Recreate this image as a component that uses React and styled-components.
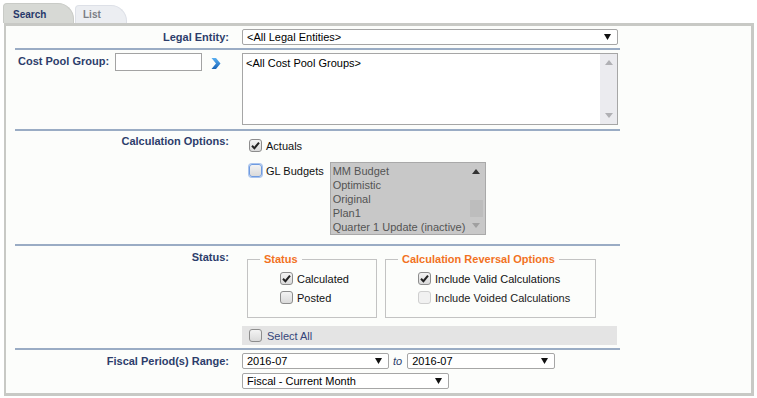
import styled, { createGlobalStyle } from "styled-components";

const GlobalStyle = createGlobalStyle`
  body {
    margin: 0;
    background: #ffffff;
    font-family: "Liberation Sans", Arial, sans-serif;
    font-size: 11px;
    color: #111;
  }
`;

const budgets = ["MM Budget", "Optimistic", "Original", "Plan1", "Quarter 1 Update (inactive)"];

const Tick = () => (
  <svg width="11" height="11" viewBox="0 0 11 11">
    <path d="M2 5.8 L4.4 8.2 L9 2.6" fill="none" stroke="#222" strokeWidth="2" />
  </svg>
);

const Check = ({ checked, focus, disabled, children }) => (
  <CheckRow $disabled={disabled}>
    <Box $focus={focus} $disabled={disabled}>{checked && <Tick />}</Box>
    {children}
  </CheckRow>
);

const Dropdown = ({ width, children }) => (
  <SelectBox $w={width}>
    <span>{children}</span>
    <svg width="7" height="6" viewBox="0 0 7 6">
      <path d="M0 0 H7 L3.5 6 Z" fill="#111" />
    </svg>
  </SelectBox>
);

const Arrow = ({ up, color }) => (
  <ArrowCell>
    <svg width="8" height="5" viewBox="0 0 8 5">
      <path d={up ? "M0 5 H8 L4 0 Z" : "M0 0 H8 L4 5 Z"} fill={color} />
    </svg>
  </ArrowCell>
);

const App = () => {
  return (
    <Page>
      <GlobalStyle />
      <Tabs>
        <Tab $active>Search</Tab>
        <Tab>List</Tab>
      </Tabs>
      <Panel>
        <Form>
          <Section $pad="3px 0 3px">
            <Label>Legal Entity:</Label>
            <Dropdown width={376}>&lt;All Legal Entities&gt;</Dropdown>
          </Section>

          <Section $pad="3px 0 4px">
            <CostCell>
              <Label $left>Cost Pool Group:</Label>
              <TextInput />
              <Go width="10" height="11" viewBox="0 0 10 11">
                <defs>
                  <linearGradient id="go" x1="0" y1="0" x2="0" y2="1">
                    <stop offset="0" stopColor="#5ab0f2" />
                    <stop offset="1" stopColor="#1763b8" />
                  </linearGradient>
                </defs>
                <path d="M0.5 0 H5 L9.5 5.5 L5 11 H0.5 L5 5.5 Z" fill="url(#go)" />
              </Go>
            </CostCell>
            <ListBox $w={376} $h={72}>
              <Items $pad="2px 3px">
                <Item>&lt;All Cost Pool Groups&gt;</Item>
              </Items>
              <VScroll $bg="#ebebef">
                <Arrow up color="#b0b0b4" />
                <Spacer />
                <Arrow color="#b0b0b4" />
              </VScroll>
            </ListBox>
          </Section>

          <Section $pad="0 0 9px">
            <Label $top={2}>Calculation Options:</Label>
            <Column $top={7}>
              <Check checked>Actuals</Check>
              <BudgetRow>
                <Check focus>GL Budgets</Check>
                <ListBox $w={156} $h={73} $disabled>
                  <Items $pad="1px 2px">
                    {budgets.map((b) => (
                      <Item key={b} $muted>{b}</Item>
                    ))}
                  </Items>
                  <VScroll $bg="#c8c8c8">
                    <Arrow up color="#333" />
                    <Spacer />
                    <Thumb />
                    <Arrow color="#a0a0a0" />
                  </VScroll>
                </ListBox>
              </BudgetRow>
            </Column>
          </Section>

          <Section $pad="0 0 3px">
            <Label $top={3}>Status:</Label>
            <Column $top={6}>
              <Groups>
                <Group $w={130}>
                  <Legend>Status</Legend>
                  <GroupBody>
                    <Check checked>Calculated</Check>
                    <Check>Posted</Check>
                  </GroupBody>
                </Group>
                <Group $w={211}>
                  <Legend>Calculation Reversal Options</Legend>
                  <GroupBody>
                    <Check checked>Include Valid Calculations</Check>
                    <Check disabled>Include Voided Calculations</Check>
                  </GroupBody>
                </Group>
              </Groups>
              <SelectAll>
                <Check>
                  <SelectAllText>Select All</SelectAllText>
                </Check>
              </SelectAll>
            </Column>
          </Section>

          <Section $pad="3px 0 4px" $last>
            <Label>Fiscal Period(s) Range:</Label>
            <Column>
              <RangeRow>
                <Dropdown width={147}>2016-07</Dropdown>
                <To>to</To>
                <Dropdown width={148}>2016-07</Dropdown>
              </RangeRow>
              <Dropdown width={207}>Fiscal - Current Month</Dropdown>
            </Column>
          </Section>
        </Form>
      </Panel>
    </Page>
  );
};

export default App;

const Page = styled.div`
  padding: 3px 0 0 3px;
  width: 750px;
`;

const Tabs = styled.div`
  display: flex;
  align-items: flex-end;
  gap: 1px;
  height: 20px;
`;

const Tab = styled.div`
  box-sizing: border-box;
  height: ${(p) => (p.$active ? 20 : 18)}px;
  width: ${(p) => (p.$active ? 71 : 52)}px;
  padding: ${(p) => (p.$active ? "5px 0 0 9px" : "3px 0 0 7px")};
  background: ${(p) => (p.$active ? "#d7d9d5" : "#eceef2")};
  border: 1px solid ${(p) => (p.$active ? "#c9cbc7" : "#dde0e7")};
  border-bottom: none;
  border-radius: 4px 16px 0 0;
  font-size: 10px;
  font-weight: bold;
  color: ${(p) => (p.$active ? "#26386a" : "#7a7d85")};
`;

const Panel = styled.div`
  box-sizing: border-box;
  width: 750px;
  border: 3px solid #c8c9c5;
  border-left-width: 2px;
  margin-left: 1px;
  background: #fcfdfb;
  padding-left: 9px;
`;

const Form = styled.div`
  width: 605px;
`;

const Section = styled.div`
  display: grid;
  grid-template-columns: 227px 1fr;
  align-items: start;
  padding: ${(p) => p.$pad};
  border-bottom: ${(p) => (p.$last ? "none" : "2px solid #9aacc4")};
`;

const Label = styled.div`
  font-weight: bold;
  color: #2d3d6b;
  line-height: 16px;
  white-space: nowrap;
  text-align: ${(p) => (p.$left ? "left" : "right")};
  padding: ${(p) => (p.$left ? "0 0 0 3px" : `${p.$top || 0}px 13px 0 0`)};
`;

const CostCell = styled.div`
  display: flex;
  align-items: flex-start;
`;

const TextInput = styled.div`
  box-sizing: border-box;
  width: 87px;
  height: 18px;
  margin-left: 6px;
  border: 1px solid #a3a3a3;
  background: #fff;
`;

const Go = styled.svg`
  margin: 5px 0 0 9px;
`;

const SelectBox = styled.div`
  box-sizing: border-box;
  width: ${(p) => p.$w}px;
  height: 16px;
  display: flex;
  align-items: center;
  justify-content: space-between;
  padding: 0 6px 0 4px;
  border: 1px solid #a6a6a6;
  border-radius: 2px;
  background: #fff;
  color: #000;
  line-height: 14px;
`;

const ListBox = styled.div`
  box-sizing: border-box;
  width: ${(p) => p.$w}px;
  height: ${(p) => p.$h}px;
  display: flex;
  border: 1px solid ${(p) => (p.$disabled ? "#a9a9a9" : "#a6a6a6")};
  background: ${(p) => (p.$disabled ? "#c8c8c8" : "#fff")};
`;

const Items = styled.div`
  flex: 1;
  padding: ${(p) => p.$pad};
  overflow: hidden;
`;

const Item = styled.div`
  line-height: 14px;
  white-space: nowrap;
  color: ${(p) => (p.$muted ? "#545454" : "#000")};
`;

const VScroll = styled.div`
  width: 17px;
  display: flex;
  flex-direction: column;
  background: ${(p) => p.$bg};
`;

const ArrowCell = styled.div`
  height: 17px;
  display: flex;
  align-items: center;
  justify-content: center;
`;

const Spacer = styled.div`
  flex: 1;
`;

const Thumb = styled.div`
  height: 17px;
  margin: 0 2px;
  background: #bdbdbd;
`;

const Column = styled.div`
  display: flex;
  flex-direction: column;
  align-items: flex-start;
  gap: ${(p) => (p.$top ? 0 : 4)}px;
  padding-top: ${(p) => p.$top || 0}px;
`;

const CheckRow = styled.div`
  display: flex;
  align-items: center;
  gap: 4px;
  height: 15px;
  padding-left: 7px;
  white-space: nowrap;
  color: ${(p) => (p.$disabled ? "#222" : "#111")};
`;

const Box = styled.span`
  box-sizing: border-box;
  width: 13px;
  height: 13px;
  display: flex;
  align-items: center;
  justify-content: center;
  border-radius: 3px;
  border: 1px solid ${(p) => (p.$focus ? "#6f9be0" : p.$disabled ? "#cfcfcf" : "#8d8d8d")};
  box-shadow: ${(p) => (p.$focus ? "0 0 0 1px #a9c4ee" : "none")};
  background: ${(p) =>
    p.$disabled ? "#f1f1f1" : "linear-gradient(#f3f3f3, #dadada)"};
`;

const BudgetRow = styled.div`
  display: flex;
  align-items: flex-start;
  gap: 6px;
  margin-top: 9px;

  & > div:first-child {
    margin-top: 1px;
  }
`;

const Groups = styled.div`
  display: flex;
  gap: 8px;
  margin-left: 5px;
`;

const Group = styled.fieldset`
  box-sizing: border-box;
  width: ${(p) => p.$w}px;
  margin: 0;
  padding: 0;
  min-width: 0;
  border: 1px solid #c3c3c3;
`;

const Legend = styled.legend`
  margin-left: 12px;
  padding: 0 4px;
  line-height: 14px;
  font-weight: bold;
  color: #f2721f;
`;

const GroupBody = styled.div`
  display: flex;
  flex-direction: column;
  gap: 4px;
  padding: 5px 0 12px 25px;
`;

const SelectAll = styled.div`
  box-sizing: border-box;
  width: 375px;
  height: 19px;
  margin-top: 8px;
  display: flex;
  align-items: center;
  padding-left: 0;
  background: #e4e4e4;
`;

const SelectAllText = styled.span`
  color: #34447a;
  margin-left: 1px;
`;

const RangeRow = styled.div`
  display: flex;
  align-items: center;
  gap: 4px;
`;

const To = styled.span`
  font-style: italic;
  color: #2d3d6b;
  padding-right: 1px;
`;
